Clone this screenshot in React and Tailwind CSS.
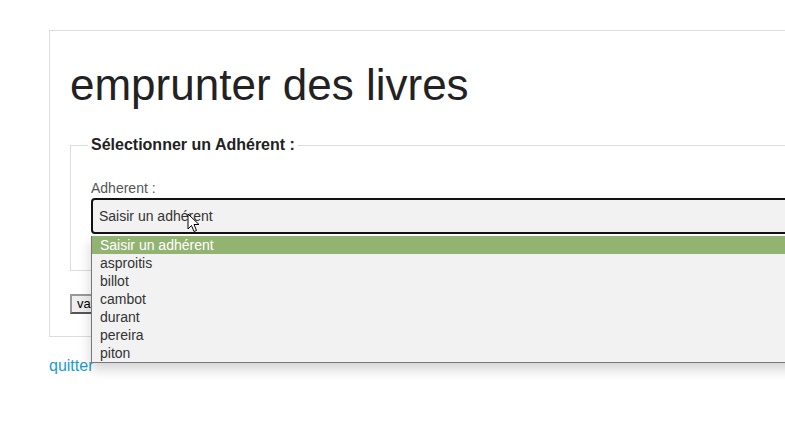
import React from 'react';

const adherents = ['Saisir un adhérent', 'asproitis', 'billot', 'cambot', 'durant', 'pereira', 'piton'];

export default function App() {
  return (
    <div className="relative w-[785px] h-[443px] overflow-hidden bg-white font-['Liberation_Sans',Arial,sans-serif]">
      <div className="pl-[49px] pt-[30px] w-[1100px]">
        <div className="border border-[#dddddd] px-5 pt-[30px] pb-[21px]">
          <h1 className="text-[44px] leading-[1.1] text-[#222222] mb-[26px]">emprunter des livres</h1>

          <fieldset className="border border-[#dddddd] px-5 pb-[36px] mb-[20px]">
            <legend className="-ml-[3px] px-[3px] text-[16px] leading-5 font-bold text-[#222222]">
              Sélectionner un Adhérent :
            </legend>
            <label className="block mt-[25px] mb-[2px] text-[14px] leading-4 text-[#555555]">Adherent :</label>
            <div className="relative">
              <div className="h-9 border-2 border-[#111111] rounded-[4px] bg-[#f2f2f2] pl-[6px] flex items-center text-[14px] text-[#333333]">
                Saisir un adhérent
              </div>
              <ul className="absolute left-0 top-[38px] w-full bg-[#f2f2f2] border-l border-b border-[#777777] shadow-[0_6px_12px_rgba(0,0,0,0.18)] z-10">
                {adherents.map((a, i) => (
                  <li
                    key={a}
                    className={`h-[18px] pl-[8px] text-[14px] leading-[18px] ${
                      i === 0 ? 'bg-[#93b372] text-white' : 'text-[#333333]'
                    }`}
                  >
                    {a}
                  </li>
                ))}
              </ul>
            </div>
          </fieldset>

          <button className="h-5 px-[5px] border-2 border-t-[#999] border-l-[#999] border-r-[#555] border-b-[#555] bg-[#efefef] text-[13px] leading-4 text-black">
            valider
          </button>
        </div>
        <a className="block mt-[17px] text-[16px] leading-6 text-[#1a9bd1]" href="#">quitter</a>
      </div>

      <svg className="absolute left-[187px] top-[213px] z-20" width="13" height="20" viewBox="0 0 13 20">
        <path d="M1 1 L1 16 L4.5 12.5 L7 18.5 L9.5 17.5 L7 11.5 L12 11.5 Z" fill="#ffffff" stroke="#000000" strokeWidth="1" strokeLinejoin="round" />
      </svg>
    </div>
  );
}
